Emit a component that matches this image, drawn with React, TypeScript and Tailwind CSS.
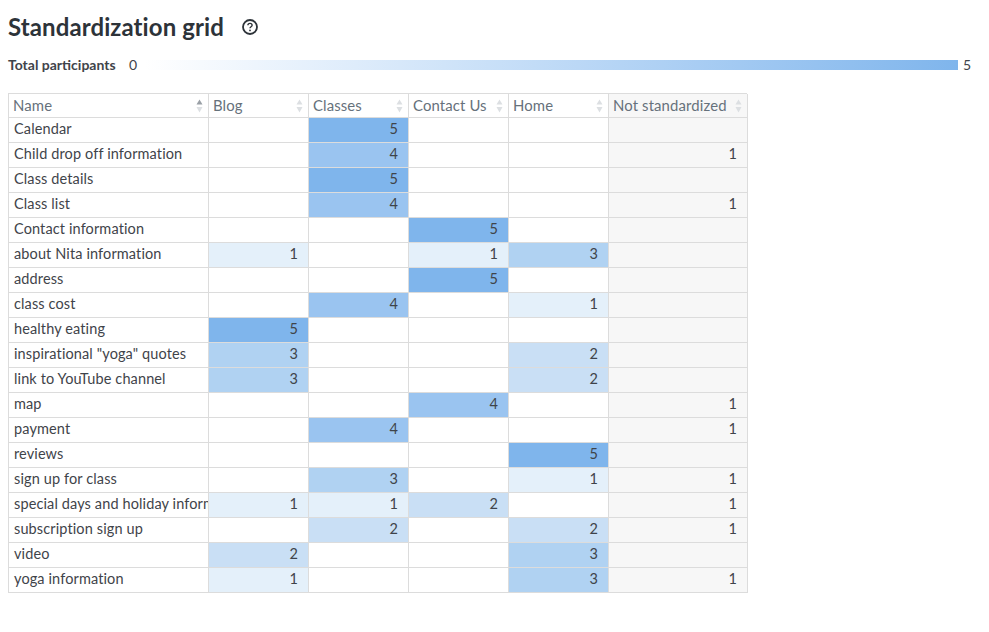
const COLORS: Record<number, string> = {
  1: "bg-[#e4f0fa]",
  2: "bg-[#c9dff5]",
  3: "bg-[#b0d2f2]",
  4: "bg-[#9ac4f0]",
  5: "bg-[#7fb5ec]",
};

const HEADERS = ["Name", "Blog", "Classes", "Contact Us", "Home", "Not standardized"];

const ROWS: [string, number, number, number, number, number][] = [
  ["Calendar", 0, 5, 0, 0, 0],
  ["Child drop off information", 0, 4, 0, 0, 1],
  ["Class details", 0, 5, 0, 0, 0],
  ["Class list", 0, 4, 0, 0, 1],
  ["Contact information", 0, 0, 5, 0, 0],
  ["about Nita information", 1, 0, 1, 3, 0],
  ["address", 0, 0, 5, 0, 0],
  ["class cost", 0, 4, 0, 1, 0],
  ["healthy eating", 5, 0, 0, 0, 0],
  ['inspirational "yoga" quotes', 3, 0, 0, 2, 0],
  ["link to YouTube channel", 3, 0, 0, 2, 0],
  ["map", 0, 0, 4, 0, 1],
  ["payment", 0, 4, 0, 0, 1],
  ["reviews", 0, 0, 0, 5, 0],
  ["sign up for class", 0, 3, 0, 1, 1],
  ["special days and holiday information", 1, 1, 2, 0, 1],
  ["subscription sign up", 0, 2, 0, 2, 1],
  ["video", 2, 0, 0, 3, 0],
  ["yoga information", 1, 0, 0, 3, 1],
];

function SortArrows({ active }: { active?: boolean }) {
  return (
    <svg width="7" height="14" viewBox="0 0 7 14" className="shrink-0">
      <path d="M3.5 0.5 L6.5 5.5 L0.5 5.5 Z" fill={active ? "#9aa0a6" : "#dcdfe2"} />
      <path d="M3.5 13.5 L6.5 8 L0.5 8 Z" fill="#dcdfe2" />
    </svg>
  );
}

export default function App() {
  return (
    <div className="min-h-[632px] bg-white pt-[12px] pl-[8px] font-['Lato','Liberation_Sans',sans-serif] text-[#3f444a]">
      <div className="flex h-[30px] items-center">
        <h1 className="text-[24px] leading-[30px] font-bold tracking-[0.1px] text-[#2d3339]">Standardization grid</h1>
        <svg width="18" height="18" viewBox="0 0 18 18" className="ml-[17px]" fill="none">
          <circle cx="9" cy="9" r="7" stroke="#2d3339" strokeWidth="1.8" />
          <path d="M6.9 7.2 C6.9 4.8 11.1 4.8 11.1 7.2 C11.1 8.7 9 8.7 9 10.3" stroke="#2d3339" strokeWidth="1.4" />
          <circle cx="9" cy="12.4" r="0.9" fill="#2d3339" />
        </svg>
      </div>

      <div className="mt-[9px] flex h-[28px] items-center text-[14px]">
        <span className="w-[121px] pb-[2px] font-bold">Total participants</span>
        <span className="w-[16px] pb-[2px]">0</span>
        <div className="h-[10px] w-[813px] bg-gradient-to-r from-white to-[#7fb5ec]" />
        <span className="ml-[5px] pb-[2px]">5</span>
      </div>

      <div className="mt-[14px] grid w-[739px] grid-cols-[200px_100px_100px_100px_100px_139px] border-t border-l border-[#dcdcdc] text-[14.5px] tracking-[0.12px]">
        {HEADERS.map((h, i) => (
          <div
            key={h}
            className={`flex h-[24px] items-center justify-between border-r border-b border-[#dcdcdc] pr-[5px] pl-[4px] text-[14.9px] text-[#66717b] ${i === 5 ? "bg-[#f7f7f7]" : ""}`}
          >
            <span className="whitespace-nowrap">{h}</span>
            <SortArrows active={i === 0} />
          </div>
        ))}
        {ROWS.map((row) => (
          <div key={row[0]} className="contents">
            <div className="flex h-[25px] items-center overflow-hidden border-r border-b border-[#dcdcdc] pb-[3px] pl-[5px] whitespace-nowrap">
              {row[0]}
            </div>
            {row.slice(1).map((v, i) => {
              const n = v as number;
              const bg = n > 0 && i < 4 ? COLORS[n] : i === 4 ? "bg-[#f7f7f7]" : "";
              return (
                <div
                  key={i}
                  className={`flex h-[25px] items-center justify-end border-r border-b border-[#dcdcdc] pr-[10px] pb-[3px] ${bg}`}
                >
                  {n > 0 ? n : ""}
                </div>
              );
            })}
          </div>
        ))}
      </div>
    </div>
  );
}
